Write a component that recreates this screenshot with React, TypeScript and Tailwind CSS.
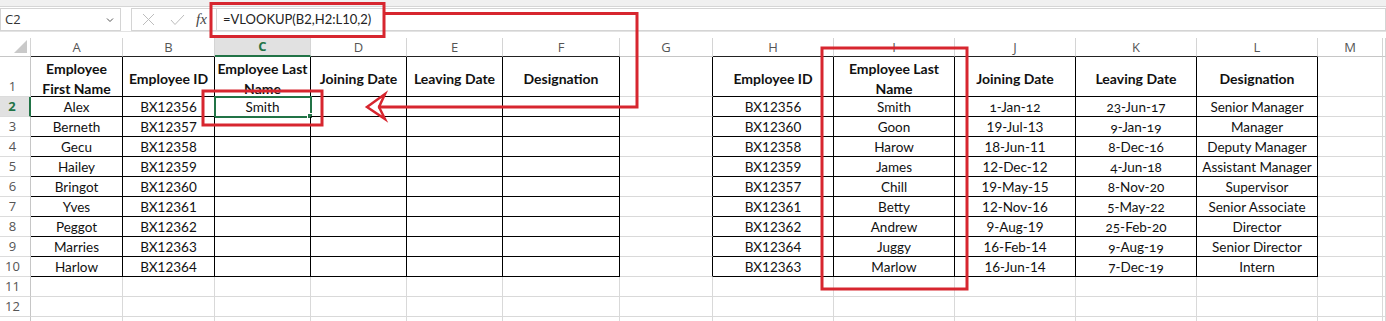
import React from "react";

const colLetters = ["", "A", "B", "C", "D", "E", "F", "G", "H", "I", "J", "K", "L", "M", ""];

const headers: Record<number, string[]> = {
  1: ["Employee", "First Name"],
  2: ["Employee ID"],
  3: ["Employee Last", "Name"],
  4: ["Joining Date"],
  5: ["Leaving Date"],
  6: ["Designation"],
  8: ["Employee ID"],
  9: ["Employee Last", "Name"],
  10: ["Joining Date"],
  11: ["Leaving Date"],
  12: ["Designation"],
};

const firstNames = ["Alex", "Berneth", "Gecu", "Hailey", "Bringot", "Yves", "Peggot", "Marries", "Harlow"];
const leftIds = ["BX12356", "BX12357", "BX12358", "BX12359", "BX12360", "BX12361", "BX12362", "BX12363", "BX12364"];

const lookup = [
  ["BX12356", "Smith", "1-Jan-12", "23-Jun-17", "Senior Manager"],
  ["BX12360", "Goon", "19-Jul-13", "9-Jan-19", "Manager"],
  ["BX12358", "Harow", "18-Jun-11", "8-Dec-16", "Deputy Manager"],
  ["BX12359", "James", "12-Dec-12", "4-Jun-18", "Assistant Manager"],
  ["BX12357", "Chill", "19-May-15", "8-Nov-20", "Supervisor"],
  ["BX12361", "Betty", "12-Nov-16", "5-May-22", "Senior Associate"],
  ["BX12362", "Andrew", "9-Aug-19", "25-Feb-20", "Director"],
  ["BX12364", "Juggy", "16-Feb-14", "9-Aug-19", "Senior Director"],
  ["BX12363", "Marlow", "16-Jun-14", "7-Dec-19", "Intern"],
];

const inTable = (c: number) => (c >= 1 && c <= 6) || (c >= 8 && c <= 12);

function cellText(r: number, c: number): string {
  if (r < 2 || r > 10) return "";
  const i = r - 2;
  if (c === 1) return firstNames[i];
  if (c === 2) return leftIds[i];
  if (c === 3 && r === 2) return "Smith";
  if (c >= 8 && c <= 12) return lookup[i][c - 8];
  return "";
}

function FormulaBar() {
  return (
    <div className="flex h-[23px] items-stretch mt-px font-['Open_Sans',sans-serif]">
      <div className="w-[121px] flex items-center justify-between border border-[#d4d4d4] bg-white pl-1 pr-1.5 text-[13px] text-[#333]">
        <span>C2</span>
        <svg width="8" height="6" viewBox="0 0 8 6">
          <path d="M1 1.5 L4 4.5 L7 1.5" fill="none" stroke="#555" strokeWidth="1" />
        </svg>
      </div>
      <div className="w-[10px]" />
      <div className="w-[86px] flex items-center border border-[#d4d4d4] bg-white pl-[10px] gap-[15px]">
        <svg width="13" height="13" viewBox="0 0 13 13">
          <path d="M1 1 L12 12 M12 1 L1 12" stroke="#bdbdbd" strokeWidth="1" />
        </svg>
        <svg width="15" height="12" viewBox="0 0 15 12">
          <path d="M1 6 L5 10.5 L14 1" fill="none" stroke="#bdbdbd" strokeWidth="1" />
        </svg>
        <span className="font-['Liberation_Serif',serif] italic text-[15px] text-[#444] -ml-1">fx</span>
      </div>
      <div className="flex-1 flex items-center border border-[#d4d4d4] border-l-0 bg-white pl-[6px] font-['Lato',sans-serif] text-[13px] text-[#222]">
        =VLOOKUP(B2,H2:L10,2)
      </div>
    </div>
  );
}

function Sheet() {
  const rows = Array.from({ length: 14 }, (_, r) => r);
  const cols = Array.from({ length: 15 }, (_, c) => c);
  return (
    <div className="grid grid-cols-[31px_92px_92px_96px_96px_96px_117px_93px_121px_121px_121px_121px_121px_65px_1fr] grid-rows-[19px_40px_repeat(12,20px)] font-['Lato',sans-serif] text-[13.5px] text-[#111]">
      {rows.map((r) =>
        cols.map((c) => {
          const key = `${r}-${c}`;
          if (r === 0 && c === 0) {
            return (
              <div key={key} className="relative border-r border-b border-r-[#d4d4d4] border-b-[#c6c6c6] bg-white">
                <svg className="absolute right-[3px] bottom-[3px]" width="13" height="13" viewBox="0 0 13 13">
                  <path d="M13 0 L13 13 L0 13 Z" fill="#c9c9c9" />
                </svg>
              </div>
            );
          }
          if (r === 0) {
            const sel = c === 3;
            return (
              <div
                key={key}
                className={`flex items-center justify-center pt-[1px] font-['Open_Sans',sans-serif] text-[13px] border-r border-r-[#d4d4d4] ${
                  sel
                    ? "bg-[#e1e1e1] border-b-2 border-b-[#217346] text-[#217346] font-bold"
                    : inTable(c)
                    ? "bg-white border-b border-b-[#222] text-[#555]"
                    : "bg-white border-b border-b-[#c6c6c6] text-[#555]"
                }`}
              >
                {colLetters[c]}
              </div>
            );
          }
          if (c === 0) {
            const sel = r === 2;
            return (
              <div
                key={key}
                className={`flex justify-center pr-[5px] font-['Open_Sans',sans-serif] text-[13px] border-b border-b-[#dcdcdc] ${
                  r === 1 ? "items-end" : "items-center"
                } ${
                  sel
                    ? "bg-[#e1e1e1] border-r-2 border-r-[#217346] text-[#217346] font-bold"
                    : "bg-white border-r border-r-[#c6c6c6] text-[#555]"
                }`}
              >
                {r < 13 ? r : ""}
              </div>
            );
          }
          const tableRow = r >= 1 && r <= 10;
          const rightBlack = tableRow && (inTable(c) || inTable(c + 1));
          const bottomBlack = tableRow && inTable(c);
          const oldstyle = r >= 2 && r <= 10 && (c === 11 || (c === 10 && r === 2));
          const selected = r === 2 && c === 3;
          return (
            <div
              key={key}
              className={`relative flex items-center justify-center text-center border-r border-b whitespace-nowrap ${
                rightBlack ? "border-r-black" : "border-r-[#d9d9d9]"
              } ${bottomBlack ? "border-b-black" : "border-b-[#d9d9d9]"} ${
                oldstyle ? "[font-variant-numeric:oldstyle-nums]" : ""
              } ${selected ? "outline-2 outline-[#217346] -outline-offset-1" : ""}`}
            >
              {r === 1 && headers[c] ? (
                <div className="flex flex-col font-bold text-[14px] leading-[20px] pt-[4px]">
                  {headers[c].map((line) => (
                    <span key={line}>{line}</span>
                  ))}
                </div>
              ) : (
                <span className="leading-[20px]">{cellText(r, c)}</span>
              )}
              {selected && (
                <span className="absolute -right-[3px] -bottom-[3px] w-[6px] h-[6px] bg-[#217346] border border-white" />
              )}
            </div>
          );
        })
      )}
    </div>
  );
}

function Annotations() {
  return (
    <svg className="absolute inset-0 pointer-events-none" width="1386" height="321" viewBox="0 0 1386 321">
      <g fill="none" stroke="#d7262f" strokeWidth="3" strokeLinejoin="miter">
        <rect x="211" y="3.5" width="173" height="33" />
        <rect x="203" y="91" width="119" height="34" />
        <rect x="822" y="48" width="145" height="241" />
        <path d="M385 13.5 L637 13.5 L637 107 L378 107" />
      </g>
      <path
        d="M367 107 L385 94 L379 107 L385 119 Z"
        fill="none"
        stroke="#d7262f"
        strokeWidth="2.5"
        strokeLinejoin="miter"
      />
    </svg>
  );
}

export default function App() {
  return (
    <div className="relative w-[1386px] h-[321px] overflow-hidden bg-white">
      <div className="h-[7px] bg-[#f0f0f0] border-b border-[#d6d6d6]" />
      <FormulaBar />
      <div className="h-[7px] border-t border-[#e3e3e3]" />
      <Sheet />
      <Annotations />
    </div>
  );
}
